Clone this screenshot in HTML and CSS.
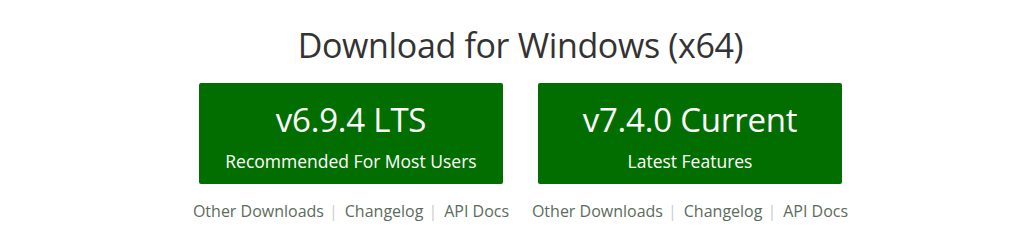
FILE: index.html
```html
<!DOCTYPE html>
<html>
<head>
<meta charset="utf-8">
<link rel="stylesheet" href="styles.css">
</head>
<body>
<section class="home">
  <h1 class="title">Download for Windows (x64)</h1>
  <div class="downloads">
    <div class="col">
      <a class="btn" href="#">
        <span class="ver">v6.9.4 LTS</span>
        <span class="sub">Recommended For Most Users</span>
      </a>
      <ul class="links">
        <li><a href="#">Other Downloads</a></li>
        <li><a href="#">Changelog</a></li>
        <li><a href="#">API Docs</a></li>
      </ul>
    </div>
    <div class="col">
      <a class="btn" href="#">
        <span class="ver">v7.4.0 Current</span>
        <span class="sub">Latest Features</span>
      </a>
      <ul class="links">
        <li><a href="#">Other Downloads</a></li>
        <li><a href="#">Changelog</a></li>
        <li><a href="#">API Docs</a></li>
      </ul>
    </div>
  </div>
</section>
</body>
</html>
```
FILE: styles.css
```css
html, body { margin: 0; padding: 0; background: #fff; }
body { font-family: "Open Sans", "Liberation Sans", sans-serif; color: #333; }
.home { width: 1036px; display: flex; flex-direction: column; align-items: center; padding-top: 20px; padding-left: 5px; box-sizing: border-box; }
.title { margin: 0; font-weight: 400; font-size: 34px; line-height: 50px; color: #333; letter-spacing: -0.35px; }
.downloads { display: flex; gap: 35px; margin-top: 13px; }
.col { width: 304px; display: flex; flex-direction: column; align-items: center; }
.btn { width: 304px; height: 101px; background: #026e00; border-radius: 2px; color: #fff; text-decoration: none; display: flex; flex-direction: column; align-items: center; box-sizing: border-box; padding-top: 14px; }
.ver { font-size: 33px; line-height: 46px; letter-spacing: -0.2px; }
.sub { font-size: 17.5px; line-height: 24px; margin-top: 6px; }
.links { list-style: none; margin: 15px 0 0; padding: 0; display: flex; flex-shrink: 0; white-space: nowrap; font-size: 16px; line-height: 24px; }
.links li + li::before { content: "|"; color: #ccc; margin: 0 7px 0 5px; }
.links a { color: #5b6c5a; text-decoration: none; }
```
